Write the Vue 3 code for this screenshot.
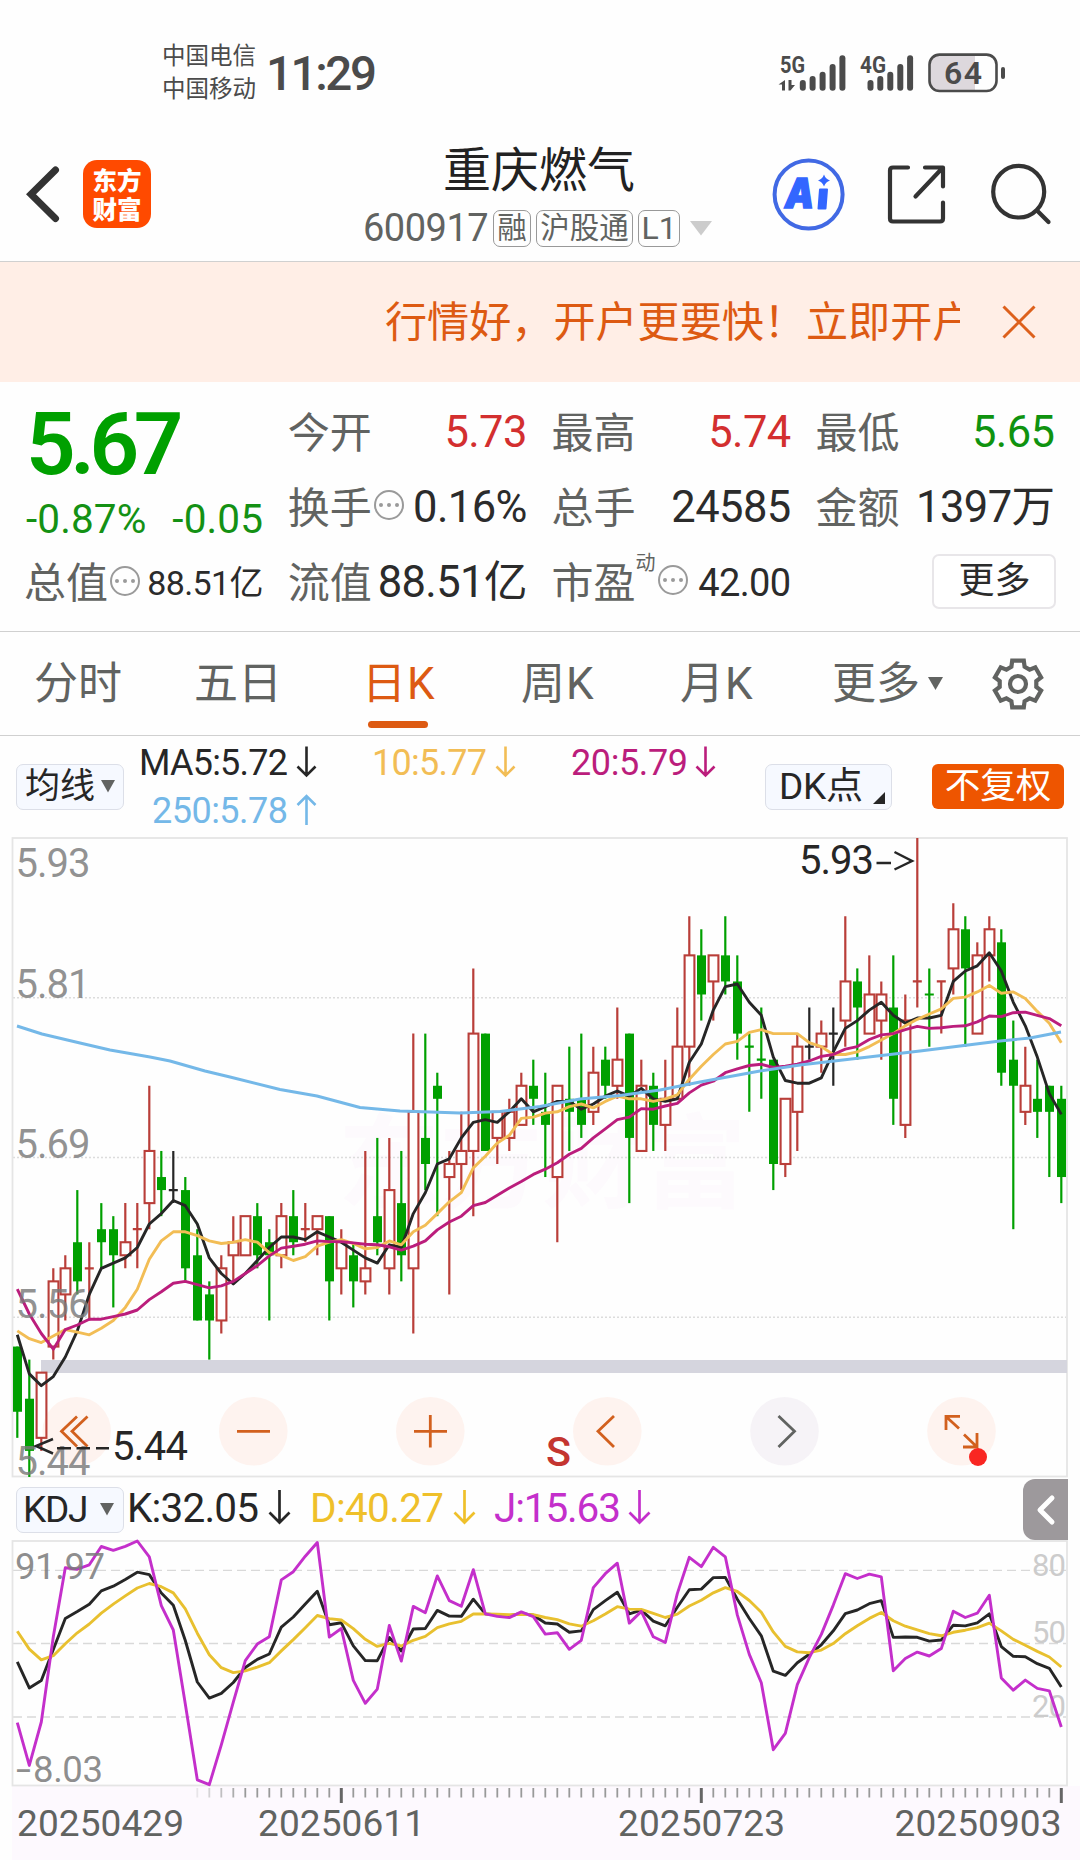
<script setup>
// Each candle: kind (r = up, g = down, b = flat), body top, body bottom, high, low - prices in cents
const raw = `g554,549,554,547 g550,546,553,544 r552,547,552,546 r559,554,560,553 r560,558,561,556 g562,559,566,558
r560,560,562,556 g563,562,565,560 g563,561,564,557 r562,561,565,560 r563,563,565,560 r569,565,574,563
g567,566,569,564 b566,566,569,565 g566,560,567,559 g561,556,563,556 g558,556,559,553 r560,556,561,555
r562,561,564,559 r564,561,564,561 g564,561,565,560 g562,561,563,556 r564,561,565,560 g564,562,566,561
r563,563,565,562 r564,563,564,561 g564,559,564,556 r562,560,563,558 g561,559,562,557 r560,559,569,558
g564,562,570,561 r566,560,570,558 g565,561,569,559 r572,560,578,555 g570,568,578,566 g574,573,575,564
r568,567,569,558 r569,568,572,566 r578,569,583,564 g578,569,578,569 r572,570,572,568 r572,570,573,569
r574,571,575,571 g574,573,576,571 g572,571,575,567 r574,567,574,562 g573,572,577,569 g573,571,578,570
r575,572,577,571 g576,574,577,573 r576,574,580,573 g578,570,578,565 r574,569,576,569 g574,571,575,569
r573,571,576,569 r577,573,580,573 r584,577,587,574 g584,581,586,579 r584,582,584,579 g584,582,587,581
g582,578,584,576 g577,577,578,572 g576,576,580,573 g576,568,576,566 r573,568,573,567 r577,572,578,569
b577,577,580,576 r578,577,579,575 b578,578,580,574 r582,579,587,577 g582,580,583,576 r581,578,584,578
r581,579,582,576 g580,573,584,571 r579,571,581,570 r582,582,593,580 g581,581,583,577 r582,582,582,578
r586,583,588,581 g586,583,587,577 r584,578,585,578 r586,584,587,582 g585,575,586,574 g576,574,579,563
r574,572,577,571 g573,572,576,570 g574,572,574,567 g573,567,574,565`

const STEP = 12
const X0 = 17.3
const px = (i) => X0 + i * STEP
const py = (p) => 8 + (593 - p) * 13.04

const colors = { r: '#b93e39', g: '#00a000', b: '#262626' }
const candles = raw.split(/\s+/).map((s, i) => {
  const [top, bottom, high, low] = s.slice(1).split(',').map(Number)
  const kind = s[0]
  return { kind, top, bottom, high, low, close: kind === 'g' ? bottom : top, x: px(i), color: colors[kind] }
})

const average = (n, seed) =>
  candles.map((_, i) => {
    if (i < seed.length) return seed[i]
    let sum = 0
    for (let k = i - n + 1; k <= i; k++) sum += candles[k].close
    return sum / n
  })
const line = (vals, fy) => vals.map((v, i) => `${px(i).toFixed(1)},${fy(v).toFixed(1)}`).join(' ')

const ma5 = line(average(5, [554.9, 551.9, 551, 551.7]), py)
const ma10 = line(average(10, [555.2, 554.6, 554.3, 554.8, 555.3, 555.1, 554.9, 555.4, 556]), py)
const ma20 = line(
  average(20, [558.4, 556.5, 555, 553.8, 555.3, 555.65, 556.1, 556.1, 556.3, 556.5, 556.8, 557.6, 558.2, 558.85, 559, 558.75, 558.5, 558.65, 559]),
  py
)
const ma250 =
  '17,196 42,204 80,213 110,220 150,227 170,231 205,241 230,247 280,259.5 317,266 360,277.5 400,281 460,283 500,281.5 540,276.5 580,269 620,265.5 660,260 700,252 760,241 800,235 860,228 920,221 1000,211 1030,208 1061,202'

// KDJ(9,3,3), continued from the values before the visible window
const K = [42.4, 31.7, 34.7, 47.5, 60.2, 63, 66, 71.5]
const D = [54.9, 47.6, 43.2, 44.9, 49.8, 54.3, 57.9, 62.4]
for (let i = 8; i < candles.length; i++) {
  const win = candles.slice(i - 8, i + 1)
  const lo = Math.min(...win.map((c) => c.low))
  const hi = Math.max(...win.map((c) => c.high))
  const rsv = ((candles[i].close - lo) / (hi - lo)) * 100
  K.push((K[i - 1] * 2 + rsv) / 3)
  D.push((D[i - 1] * 2 + K[i]) / 3)
}
const clamp = (v) => Math.max(-8.03, Math.min(91.97, v))
const ky = (v) => 1 + (91.97 - clamp(v)) * 2.437
const kLine = line(K, ky)
const dLine = line(D, ky)
const jLine = line(K.map((k, i) => 3 * k - 2 * D[i]), ky)

const priceLabels = [['5.93', 46.5], ['5.81', 167.5], ['5.69', 328], ['5.56', 488], ['5.44', 645]]
const ticks = Array.from({ length: 73 }, (_, k) => k + 15)
const major = [27, 57, 87]
const dates = [['20250429', 17], ['20250611', 258], ['20250723', 618], ['20250903', 894.5]]

const gear = (() => {
  const pts = []
  for (let k = 0; k < 6; k++) {
    for (const [r, d] of [[18.5, -21], [24, -14], [24, 14], [18.5, 21]]) {
      const a = ((k * 60 - 90 + d) * Math.PI) / 180
      pts.push(`${(28 + r * Math.cos(a)).toFixed(1)},${(28 + r * Math.sin(a)).toFixed(1)}`)
    }
  }
  return pts.join(' ')
})()

const bars = [[0, 24.7], [9.8, 20.7], [19.8, 16.4], [29.8, 8.7], [39.6, 0]]
</script>

<template>
  <div class="screen">
    <div class="status">
      <div class="carriers"><span>中国电信</span><span>中国移动</span></div>
      <div class="clock">11:29</div>
      <svg class="signals" width="230" height="44" viewBox="0 0 230 44">
        <g fill="#4b4b4b" font-family="Roboto, sans-serif" font-weight="700">
          <text x="1" y="20.700" font-size="24.500" textLength="25" lengthAdjust="spacingAndGlyphs">5G</text>
          <text x="81" y="20.700" font-size="24.500" textLength="26" lengthAdjust="spacingAndGlyphs">4G</text>
          <path d="M6 28v10.500h-3v-6h-3.500z M9.500 28h3v5h3.500l-4.500 5.500h-2z" />
          <rect v-for="b in bars" :key="b[0]" :x="20.800 + b[0]" :y="3.300 + b[1]" width="6" :height="35.400 - b[1]" rx="3" />
          <rect v-for="b in bars" :key="'s' + b[0]" :x="88.500 + b[0]" :y="3.300 + b[1]" width="6" :height="35.400 - b[1]" rx="3" />
        </g>
        <path d="M160 2.600H196V39H160Q150.500 39 150.500 30V12Q150.500 2.600 160 2.600Z" fill="#ddd8dd" />
        <rect x="150.500" y="2.600" width="67" height="36.400" rx="10" fill="none" stroke="#4b4b4b" stroke-width="2.600" />
        <rect x="222" y="15" width="4" height="12" rx="2" fill="#4b4b4b" />
        <text x="165" y="32.300" font-size="32" font-weight="600" fill="#4b4b4b" font-family="Roboto, sans-serif" textLength="38">64</text>
      </svg>
    </div>

    <header class="header">
      <svg class="back" width="40" height="60" viewBox="0 0 40 60"><path d="M33.500 6L9 30.300L33.500 54.500" fill="none" stroke="#333" stroke-width="7" stroke-linecap="round" /></svg>
      <div class="logo"><span>东方</span><span>财富</span></div>
      <div class="title">
        <h1>重庆燃气</h1>
        <div class="sub">
          <span class="code">600917</span>
          <span class="tag">融</span><span class="tag wide">沪股通</span><span class="tag l1">L1</span>
          <svg width="22" height="15" viewBox="0 0 22 15"><path d="M0 0H22L11 14.500Z" fill="#ccc" /></svg>
        </div>
      </div>
      <svg class="actions" width="300" height="80" viewBox="0 0 300 80" fill="none">
        <ellipse cx="38.600" cy="40.500" rx="34" ry="34" stroke="#4169e4" stroke-width="4" />
        <text x="15" y="54" font-family="Inter, Roboto, sans-serif" font-weight="900" font-style="italic" font-size="41" fill="#36f" stroke="#36f" stroke-width="1.500" textLength="29" lengthAdjust="spacingAndGlyphs">A</text>
        <path d="M50 35.500h7l-1.500 19h-7z" fill="#36f" stroke="#36f" stroke-width="2" stroke-linejoin="round" />
        <path d="M54 20.500q1.500 4.500 6 6q-4.500 1.500 -6 6q-1.500 -4.500 -6 -6q4.500 -1.500 6 -6z" fill="#36f" />
        <g stroke="#333" stroke-width="4.200" stroke-linecap="round" stroke-linejoin="round">
          <path d="M138 13.500H123Q120 13.500 120 16.500V64.500Q120 67.500 123 67.500H170Q173 67.500 173 64.500V48.500" />
          <path d="M155 13.500H173V32.500M172 14.500L145.500 42.500" />
          <ellipse cx="248.700" cy="37.700" rx="25.500" ry="25.800" />
          <path d="M267.500 57L278.500 68" />
        </g>
      </svg>
    </header>

    <div class="banner">
      <div class="marquee">行情好，开户更要快！立即开户</div>
      <svg width="36" height="36" viewBox="0 0 36 36"><path d="M2.500 2.500L33.500 33.500M33.500 2.500L2.500 33.500" stroke="#dd601c" stroke-width="3" /></svg>
    </div>

    <section class="quote">
      <div class="col">
        <div class="price">5.67</div>
        <div class="change"><span>-0.87%</span><span>-0.05</span></div>
        <div class="cell small">
          <label>总值</label><i class="info"><b></b><b></b><b></b></i><span class="val">88.51亿</span>
        </div>
      </div>
      <div class="col">
        <div class="cell"><label>今开</label><span class="val red">5.73</span></div>
        <div class="cell"><label>换手</label><i class="info"><b></b><b></b><b></b></i><span class="val">0.16%</span></div>
        <div class="cell"><label>流值</label><span class="val">88.51亿</span></div>
      </div>
      <div class="col">
        <div class="cell"><label>最高</label><span class="val red">5.74</span></div>
        <div class="cell"><label>总手</label><span class="val">24585</span></div>
        <div class="cell pe"><label>市盈</label><sup>动</sup><i class="info"><b></b><b></b><b></b></i><span class="val">42.00</span></div>
      </div>
      <div class="col">
        <div class="cell"><label>最低</label><span class="val green">5.65</span></div>
        <div class="cell"><label>金额</label><span class="val">1397万</span></div>
        <div class="cell"><button class="more">更多</button></div>
      </div>
    </section>

    <nav class="tabs">
      <span class="t1">分时</span><span class="t2">五日</span><span class="t3 active">日K</span><span class="t4">周K</span><span class="t5">月K</span>
      <span class="t6">更多<svg width="15" height="13" viewBox="0 0 15 13"><path d="M0 0H15L7.500 13Z" fill="#616361" /></svg></span>
      <svg class="gear" width="56" height="56" viewBox="0 0 56 56" fill="none" stroke="#616361" stroke-width="4.200"><polygon :points="gear" /><circle cx="28" cy="28" r="8" /></svg>
    </nav>

    <div class="ma">
      <button class="pill">均线<svg width="14" height="13" viewBox="0 0 14 13"><path d="M0 0H14L7 12.500Z" fill="#616361" /></svg></button>
      <svg class="malegend" width="600" height="94" viewBox="130 736 600 94">
        <g font-family="Roboto, sans-serif" font-size="36">
          <text x="139" y="775" fill="#262626" textLength="149">MA5:5.72</text>
          <text x="372" y="775" fill="#f2bd55" textLength="115">10:5.77</text>
          <text x="571" y="775" fill="#bb1d7c" textLength="117">20:5.79</text>
          <text x="152" y="823" fill="#74b8e8" textLength="136">250:5.78</text>
        </g>
        <g fill="none" stroke-width="2.600">
          <path d="M306.500 746.500V775M297.500 766.500L306.500 775.500L315.500 766.500" stroke="#262626" />
          <path d="M505.500 746.500V775M496.500 766.500L505.500 775.500L514.500 766.500" stroke="#f2bd55" />
          <path d="M705.500 746.500V775M696.500 766.500L705.500 775.500L714.500 766.500" stroke="#bb1d7c" />
          <path d="M306.500 825V796.500M297.500 805L306.500 796L315.500 805" stroke="#74b8e8" />
        </g>
      </svg>
      <button class="pill dk">DK点<svg width="12" height="12" viewBox="0 0 12 12"><path d="M12 0V12H0Z" fill="#262626" /></svg></button>
      <button class="adjust">不复权</button>
    </div>

    <svg class="chart" width="1080" height="652" viewBox="0 0 1080 652">
      <text x="338" y="370" font-size="102" font-weight="700" fill="#fdfafd" font-family="Noto Sans CJK SC, sans-serif">东方财富</text>
      <path d="M13 167.750H1066M13 327.500H1066M13 487.250H1066" stroke="#dcdcdc" stroke-width="1.300" stroke-dasharray="2 2" />
      <rect x="12.500" y="8" width="1054.500" height="638.500" fill="none" stroke="#e5e5e5" stroke-width="1.800" />
      <rect x="41" y="530" width="1026" height="13" fill="#d5d5de" />
      <g v-for="(c, i) in candles" :key="i">
        <template v-if="c.top === c.bottom">
          <path :d="`M${c.x} ${py(c.high)}V${py(c.low)}M${c.x - 4.500} ${py(c.top)}h9`" :stroke="c.color" stroke-width="2.200" />
        </template>
        <template v-else-if="c.kind === 'r'">
          <path :d="`M${c.x} ${py(c.high)}V${py(c.top)}M${c.x} ${py(c.bottom)}V${py(c.low)}`" :stroke="c.color" stroke-width="2.200" />
          <rect :x="c.x - 4.700" :y="py(c.top)" width="9.800" :height="py(c.bottom) - py(c.top)" fill="#fff" :stroke="c.color" stroke-width="2.100" />
        </template>
        <template v-else>
          <path :d="`M${c.x} ${py(c.high)}V${py(c.low)}`" :stroke="c.color" stroke-width="2.200" />
          <rect :x="c.x - 4.300" :y="py(c.top)" width="9" :height="py(c.bottom) - py(c.top)" :fill="c.color" />
        </template>
      </g>
      <g fill="none" stroke-width="2.900" stroke-linejoin="round">
        <polyline :points="ma5" stroke="#262626" />
        <polyline :points="ma10" stroke="#f2bd55" />
        <polyline :points="ma20" stroke="#bb1d7c" />
        <polyline :points="ma250" stroke="#74b8e8" />
      </g>
      <g fill="#ff703a" fill-opacity=".08">
        <circle cx="76.700" cy="601.300" r="34.300" /><circle cx="253.300" cy="601.300" r="34.300" /><circle cx="430.300" cy="601.300" r="34.300" />
        <circle cx="607.300" cy="601.300" r="34.300" /><circle cx="784.500" cy="601.300" r="34.300" fill="#9a70a5" /><circle cx="961.500" cy="601.300" r="34.300" />
      </g>
      <g fill="none" stroke="#d2601e" stroke-width="2.800">
        <path d="M77 586.500L61.500 601.300L77 616.500M87.500 586.500L72 601.300L87.500 616.500" />
        <path d="M237 601.300H270M414 601.300H447M430.300 585V617.500" />
        <path d="M614 586L598 601.300L614 617" />
        <path d="M778.500 586L794.500 601.300L778.500 617" stroke="#616361" />
        <path d="M960 586.300H946V600M946.500 587L959 598.500M963 617H977V603M976.500 616.500L964 604.500" />
      </g>
      <circle cx="978" cy="627" r="9" fill="#f92622" />
      <g font-family="Roboto, sans-serif" font-size="40">
        <text v-for="l in priceLabels" :key="l[0]" x="15.500" :y="l[1]" fill="#7a7a7a" fill-opacity=".82" textLength="75">{{ l[0] }}</text>
        <text x="799" y="43.500" fill="#262626" textLength="75">5.93</text>
        <text x="112" y="630" fill="#262626" textLength="76">5.44</text>
        <text x="546" y="636" fill="#c43530" font-size="41" font-weight="500" textLength="25" lengthAdjust="spacingAndGlyphs">S</text>
      </g>
      <path d="M876.500 33H891M894.500 22L912 31L894.500 39.500M53 609L36 616L53 623.500M57 618.300H71M76.500 618.300H90M96 618.300H109" fill="none" stroke="#262626" stroke-width="2.500" />
    </svg>

    <div class="kdjrow">
      <button class="pill kdj">KDJ<svg width="14" height="13" viewBox="0 0 14 13"><path d="M0 0H14L7 12.500Z" fill="#616361" /></svg></button>
      <svg class="kdjlegend" width="540" height="58" viewBox="124 1482 540 58">
        <g font-family="Roboto, sans-serif" font-size="40.500">
          <text x="127" y="1522" fill="#262626" textLength="132">K:32.05</text>
          <text x="310" y="1522" fill="#efc02a" textLength="134">D:40.27</text>
          <text x="494" y="1522" fill="#c42fcb" textLength="127">J:15.63</text>
        </g>
        <g fill="none" stroke-width="2.700">
          <path d="M279.500 1490V1522M269.500 1512.500L279.500 1522.500L289.500 1512.500" stroke="#262626" />
          <path d="M464.500 1490V1522M454.500 1512.500L464.500 1522.500L474.500 1512.500" stroke="#efc02a" />
          <path d="M639.500 1490V1522M629.500 1512.500L639.500 1522.500L649.500 1512.500" stroke="#c42fcb" />
        </g>
      </svg>
      <div class="side"><svg width="20" height="32" viewBox="0 0 20 32"><path d="M16 4L4 16L16 28" fill="none" stroke="#fff" stroke-width="5" stroke-linecap="round" stroke-linejoin="round" /></svg></div>
    </div>

    <svg class="kchart" width="1080" height="320" viewBox="0 0 1080 320">
      <rect x="12" y="246" width="1068" height="74" fill="#fdf9fe" />
      <path d="M13 30.300H1066M13 103.500H1066M13 177H1066" stroke="#d9d9d9" stroke-width="1.300" stroke-dasharray="9 5" />
      <rect x="12.500" y="1" width="1054.500" height="244.500" fill="none" stroke="#e5e5e5" stroke-width="1.800" />
      <g font-family="Roboto, sans-serif" fill="#ccc" font-size="31">
        <text x="1032" y="36" textLength="34">80</text><text x="1032" y="103" textLength="34">50</text><text x="1032" y="176.700" textLength="34">20</text>
      </g>
      <g fill="none" stroke-width="2.900" stroke-linejoin="round">
        <polyline :points="kLine" stroke="#262626" />
        <polyline :points="dLine" stroke="#e8c02f" />
        <polyline :points="jLine" stroke="#c42fcb" />
      </g>
      <g font-family="Roboto, sans-serif" fill="#7a7a7a" fill-opacity=".85" font-size="36.500">
        <text x="15" y="39" textLength="90">91.97</text>
        <text x="33" y="241.700" textLength="70">8.03</text>
        <text x="16" y="241.700" textLength="15" lengthAdjust="spacingAndGlyphs">-</text>
      </g>
      <path v-for="i in ticks" :key="i" :d="`M${px(i)} 248v${major.includes(i) ? 15 : 9.500}`" :stroke="major.includes(i) ? '#666' : '#999'" :stroke-width="major.includes(i) ? 3 : 1.800" :opacity="i < 19 ? (i - 14) / 5 : 1" />
      <g font-family="Roboto, sans-serif" fill="#616361" font-size="37">
        <text v-for="d in dates" :key="d[0]" :x="d[1]" y="296" textLength="167">{{ d[0] }}</text>
      </g>
    </svg>
  </div>
</template>

<style>
body { margin: 0; background: #fefefe; }
</style>

<style scoped>
.screen { width: 1080px; height: 1860px; overflow: hidden; background: #fefefe; font-family: Roboto, "Noto Sans CJK SC", sans-serif; color: #2b2b2b; }
.screen > * { box-sizing: border-box; }
svg { display: block; flex: none; overflow: visible; }
button { font: inherit; padding: 0; margin: 0; box-sizing: border-box; }

.status { display: flex; height: 134px; padding: 39.5px 0 0 162px; color: #4b4b4b; }
.carriers { display: flex; flex-direction: column; width: 104px; font-size: 23.5px; line-height: 33.8px; }
.clock { width: 513px; font-size: 47.5px; font-weight: 500; line-height: 68px; letter-spacing: -2.4px; }
.signals { margin-top: 12.5px; }

.header { display: flex; height: 128px; border-bottom: 1px solid #d0d0d0; }
.back { margin: 30px 0 0 22px; }
.logo { display: flex; flex-direction: column; align-items: center; justify-content: center; width: 68px; height: 68px; margin: 26px 0 0 21px; border-radius: 14px; background: #ff4a00; color: #fff; font: 900 24.5px/29px "Noto Sans CJK SC", sans-serif; }
.title { display: flex; flex-direction: column; width: 405px; margin-left: 211px; }
.title h1 { margin: 4px 0 0 81px; font-size: 48px; line-height: 66px; font-weight: 400; color: #222; }
.sub { display: flex; align-items: center; margin-top: 5px; height: 39px; color: #616361; }
.code { width: 130px; margin-left: 1px; font-size: 38px; letter-spacing: -.5px; line-height: 39px; }
.tag { display: block; box-sizing: border-box; width: 38px; height: 37px; margin-right: 5px; border: 1.5px solid #999; border-radius: 7px; font-size: 29.5px; line-height: 35px; text-align: center; }
.tag.wide { width: 97px; }
.tag.l1 { width: 42px; margin-right: 10px; font-size: 32px; }
.actions { margin: 20px 0 0 3px; }

.banner { display: flex; align-items: center; height: 120px; background: #ffeee6; }
.marquee { width: 575px; margin-left: 385px; padding-top: 2px; overflow: hidden; white-space: nowrap; font-size: 42.1px; color: #dd5a12; line-height: 64px; }
.banner svg { margin-left: 41px; }

.quote { display: flex; gap: 26.8px; height: 250px; padding: 13px 0 0 26px; border-bottom: 1px solid #d0d0d0; }
.col { width: 237px; flex: none; white-space: nowrap; }
.price { height: 98px; font-size: 87px; line-height: 99px; font-weight: 600; letter-spacing: -5.5px; color: #00a000; }
.change { display: flex; justify-content: space-between; height: 53px; font-size: 40.5px; line-height: 53px; letter-spacing: .1px; color: #149114; }
.cell { display: flex; align-items: center; height: 75px; }
.cell label { font-size: 42px; line-height: 60px; color: #616361; margin: 2px 0 0 -2px; }
.cell .val { margin-left: auto; font-size: 43.5px; line-height: 60px; letter-spacing: -.6px; }
.cell .val.red { color: #d32f2f; }
.cell .val.green { color: #0f930f; }
.col .small { height: 74px; }
.small .val { font-size: 34px; letter-spacing: -.6px; }
.info { display: flex; align-items: center; justify-content: center; gap: 4px; box-sizing: border-box; width: 30px; height: 30px; margin: -5px 0 0 2px; border: 2px solid #9a9a9a; border-radius: 50%; }
.info b { width: 4px; height: 4px; border-radius: 50%; background: #9a9a9a; }
.pe sup { width: 20px; margin: -40px 0 0; font-size: 20px; line-height: 24px; color: #616361; vertical-align: baseline; }
.pe .val { font-size: 38px; letter-spacing: -.6px; }
.more { width: 124px; height: 55px; margin: -3px -2px 0 auto; border: 2px solid #e8e6e9; border-radius: 7px; background: #fff; color: #2b2b2b; font-size: 36px; line-height: 48px; }

.tabs { display: flex; align-items: center; height: 104px; padding-left: 34px; font-size: 44px; line-height: 106px; color: #616361; border-bottom: 1px solid #d0d0d0; }
.tabs span { position: relative; flex: none; }
.t1 { width: 160px; }
.t2 { width: 168px; }
.t3 { width: 159px; }
.t4 { width: 159px; letter-spacing: 1px; }
.t5 { width: 152px; letter-spacing: 1px; }
.t6 { display: flex; align-items: center; gap: 8px; width: 158px; }
.tabs .active { color: #dd5a12; letter-spacing: 1px; }
.active::after { content: ""; position: absolute; left: 6px; bottom: 9px; width: 60px; height: 6.5px; border-radius: 4px; background: #dd5a12; }

.ma { display: flex; height: 94px; }
.pill { display: flex; align-items: center; width: 108px; height: 46px; border: 1.5px solid #dcdfe8; border-radius: 7px; background: #f6f9ff; color: #262626; font-size: 35px; line-height: 43px; }
.ma .pill { margin: 27.5px 0 0 16px; padding-left: 8px; gap: 6px; }
.malegend { margin-left: 6px; }
.ma .dk { width: 127px; margin-left: 35px; padding-left: 13px; font-size: 37px; letter-spacing: -.2px; gap: 10px; }
.dk svg { margin-top: 22px; }
.adjust { width: 132px; height: 45px; margin: 28px 0 0 40px; border: 0; border-radius: 6px; background: #ee5500; color: #fff; font-size: 35.6px; line-height: 43px; }

.kdjrow { display: flex; height: 58px; width: 1068px; }
.pill.kdj { margin: 4.5px 0 0 16px; padding-left: 6px; gap: 13px; font-size: 37px; letter-spacing: -1.2px; }
.side { display: flex; align-items: center; justify-content: center; width: 45px; height: 61px; margin: -3px 0 0 auto; border-radius: 12px 0 0 12px; background: #9d999c; }
</style>
